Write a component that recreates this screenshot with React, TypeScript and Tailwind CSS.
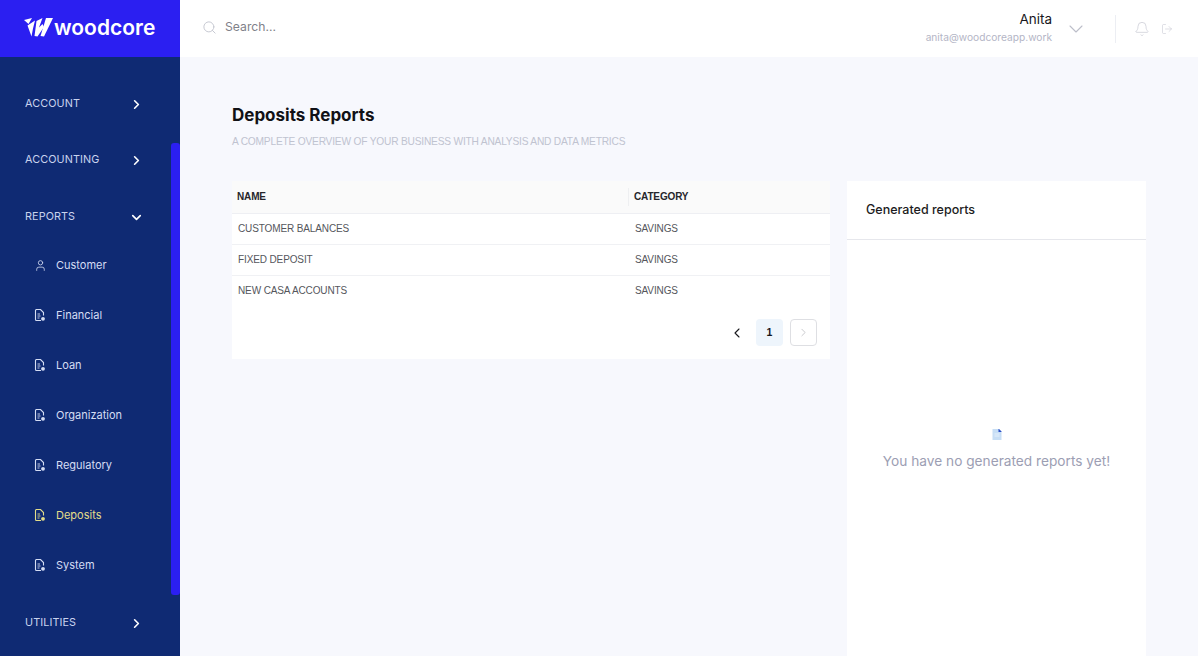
import { Bell, ChevronDown, ChevronLeft, ChevronRight, LogOut, Search, User } from "lucide-react"

const reportLinks = [
  { label: "Financial" },
  { label: "Loan" },
  { label: "Organization" },
  { label: "Regulatory" },
  { label: "Deposits", active: true },
  { label: "System" },
]

const rows = ["CUSTOMER BALANCES", "FIXED DEPOSIT", "NEW CASA ACCOUNTS"]

function Logo() {
  return (
    <svg width="29" height="19" viewBox="0 0 29 19" fill="white">
      <path d="M0 2 8 0 4.5 6Z" />
      <path d="M3.5 7.5 11 2.5 9 10.5 7.5 18.5Z" />
      <path d="M12.5 3 18.5 0 15 9.5 18.5 6 20 9 13.5 18.5 10.5 18Z" />
      <path d="M22 0H29L20 18.5 16.5 18Z" />
    </svg>
  )
}

function ReportIcon({ active }: { active?: boolean }) {
  const color = active ? "#e3dd8a" : "#d5ddf3"
  return (
    <svg width="12" height="13" viewBox="0 0 12 13" fill="none" stroke={color} strokeWidth="1.1">
      <path d="M7 11.5H2.5a1 1 0 0 1-1-1v-9a1 1 0 0 1 1-1h4l3 3V6.5" />
      <path d="M3.5 5h2.5M3.5 7h3M3.5 9h2" strokeWidth="0.9" />
      <circle cx="9" cy="9.8" r="1.9" fill={color} stroke="none" />
    </svg>
  )
}

function SectionLink({ label, open }: { label: string; open?: boolean }) {
  return (
    <div className="flex h-[20px] items-center justify-between pl-[25px] pr-[36px] text-[10.8px] tracking-[0.1px] text-[#c9d3ee]">
      <span className="-translate-y-[0.5px]">{label}</span>
      {open ? (
        <ChevronDown size={15} strokeWidth={2.6} className="text-white" />
      ) : (
        <ChevronRight size={15} strokeWidth={2.6} className="text-white" />
      )}
    </div>
  )
}

export default function App() {
  return (
    <div className="flex h-[656px] w-[1198px] overflow-hidden bg-[#f7f8fd] font-['Inter',sans-serif]">
      {/* Sidebar */}
      <aside className="flex w-[180px] shrink-0 flex-col bg-[#0f2a73]">
        <div className="flex h-[57px] items-center gap-[1px] bg-[#2b1ff1] pb-[2px] pl-[24px]">
          <Logo />
          <span className="text-[21px] font-semibold leading-none text-white">woodcore</span>
        </div>
        <div className="relative flex-1">
          <div className="absolute right-0 top-[86px] h-[452px] w-[9px] rounded-[3px] bg-[#2b1ff1]" />
          <nav className="flex flex-col pt-[37px]">
            <SectionLink label="ACCOUNT" />
            <div className="h-[36px]" />
            <SectionLink label="ACCOUNTING" />
            <div className="h-[37px]" />
            <SectionLink label="REPORTS" open />
            <div className="flex flex-col pt-[13px]">
              <a className="flex h-[50px] items-center gap-[11px] pl-[34px] text-[11px] text-[#d5ddf3]">
                <User size={13} strokeWidth={1.5} />
                <span className="-ml-[2px]">Customer</span>
              </a>
              {reportLinks.map((link) => (
                <a
                  key={link.label}
                  className={`flex h-[50px] items-center gap-[10px] pl-[34px] text-[11px] ${link.active ? "text-[#e3dd8a]" : "text-[#d5ddf3]"}`}
                >
                  <ReportIcon active={link.active} />
                  <span>{link.label}</span>
                </a>
              ))}
            </div>
            <div className="h-[23px]" />
            <SectionLink label="UTILITIES" />
          </nav>
        </div>
      </aside>

      <div className="flex min-w-0 flex-1 flex-col">
        {/* Top bar */}
        <header className="flex h-[57px] shrink-0 items-center bg-white pl-[22px] pr-[25px]">
          <div className="flex items-center pb-[2px]">
            <Search size={15} strokeWidth={1.5} className="text-[#c3c5cf]" />
            <span className="ml-[8px] text-[12.2px] text-[#7f8189]">Search...</span>
          </div>
          <div className="ml-auto pb-[2px] text-right">
            <div className="text-[13.5px] leading-[18px] text-[#17171c]">Anita</div>
            <div className="mt-[1px] text-[10.2px] leading-[16px] text-[#b4b6c6]">anita@woodcoreapp.work</div>
          </div>
          <ChevronDown size={24} strokeWidth={1.1} className="ml-[12px] text-[#bcbec9]" />
          <div className="ml-[27px] h-[28px] w-px bg-[#eceef3]" />
          <Bell size={16} strokeWidth={1.1} className="ml-[18px] text-[#c9cbd5]" />
          <LogOut size={12} strokeWidth={1.2} className="ml-[11px] text-[#c9cbd5]" />
        </header>

        {/* Content */}
        <main className="flex flex-1 flex-col pl-[52px] pr-[52px] pt-[47px]">
          <h1 className="text-[17px] font-bold leading-[22px] text-[#111116]">Deposits Reports</h1>
          <p className="mt-[8px] font-['Liberation_Sans',sans-serif] text-[10.2px] leading-[16px] tracking-[-0.2px] text-[#c0c3d0]">
            A COMPLETE OVERVIEW OF YOUR BUSINESS WITH ANALYSIS AND DATA METRICS
          </p>

          <div className="mt-[31px] flex flex-1 items-start gap-[17px]">
            <section className="w-[598px] bg-white font-['Liberation_Sans',sans-serif]">
              <div className="flex h-[33px] items-center border-b border-[#eeeff3] bg-[#fafafa] pb-[1px] text-[10px] font-bold tracking-[-0.15px] text-[#26262b]">
                <div className="w-[396px] pl-[5px]">NAME</div>
                <div className="h-[18px] w-px bg-[#eeeff1]" />
                <div className="pl-[5px]">CATEGORY</div>
              </div>
              {rows.map((name, i) => (
                <div
                  key={name}
                  className={`flex h-[31px] items-center text-[10px] tracking-[-0.12px] text-[#55565c] ${i < 2 ? "border-b border-[#f0f1f4] pb-[1px]" : "pb-[3px]"}`}
                >
                  <div className="w-[403px] pl-[6px]">{name}</div>
                  <div>SAVINGS</div>
                </div>
              ))}
              <div className="flex h-[52px] items-start justify-end gap-[7px] pr-[13px] pt-[12px]">
                <div className="flex h-[27px] w-[27px] items-center justify-center pl-[2px]">
                  <ChevronLeft size={16} strokeWidth={1.6} className="text-[#17171c]" />
                </div>
                <div className="flex h-[27px] w-[27px] items-center justify-center rounded-[4px] bg-[#eef5fc] text-[10.5px] font-bold text-[#17171c]">
                  1
                </div>
                <div className="flex h-[27px] w-[27px] items-center justify-center rounded-[4px] border border-[#dedfe3]">
                  <ChevronRight size={13} strokeWidth={1.3} className="text-[#b4b5ba]" />
                </div>
              </div>
            </section>

            <section className="flex h-[475px] w-[299px] flex-col bg-white">
              <div className="flex h-[59px] shrink-0 items-center border-b border-[#e6e7ec] pl-[19px] text-[12.5px] font-medium text-[#1c1c22]">
                Generated reports
              </div>
              <div className="flex flex-1 flex-col items-center pt-[189px]">
                <svg width="10" height="11" viewBox="0 0 10 11">
                  <path d="M.5 0H7l2.5 2.5V11H.5Z" fill="#c7def5" />
                  <path d="M6.5 0H7l2.5 2.5V3H6.5Z" fill="#2b4fc7" />
                  <path d="M2.5 5h5M2.5 7h5" stroke="#eef5fc" strokeWidth="0.8" />
                </svg>
                <p className="mt-[11px] text-[13.7px] text-[#9c9eb3]">You have no generated reports yet!</p>
              </div>
            </section>
          </div>
        </main>
      </div>
    </div>
  )
}
